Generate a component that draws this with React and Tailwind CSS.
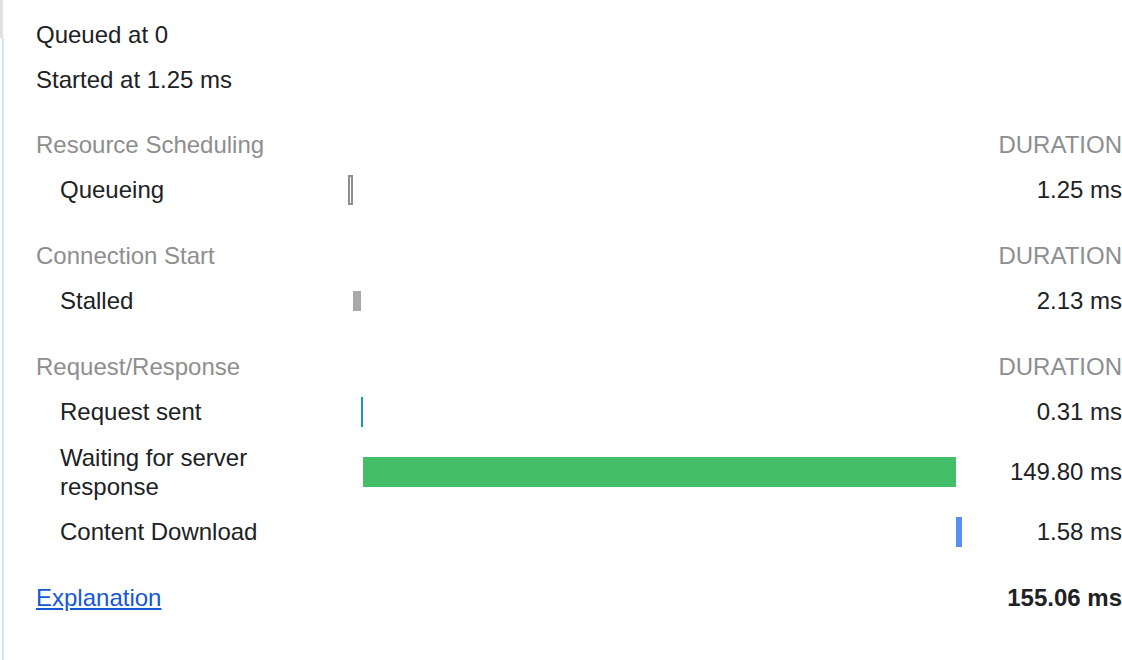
const TOTAL = 155.06;

const sections = [
  {
    title: "Resource Scheduling",
    rows: [{ label: "Queueing", start: 0, dur: 1.25, kind: "queue", value: "1.25 ms" }],
  },
  {
    title: "Connection Start",
    rows: [{ label: "Stalled", start: 1.25, dur: 2.13, kind: "stalled", value: "2.13 ms" }],
  },
  {
    title: "Request/Response",
    rows: [
      { label: "Request sent", start: 3.38, dur: 0.31, kind: "sent", value: "0.31 ms" },
      { label: "Waiting for server response", start: 3.69, dur: 149.8, kind: "wait", value: "149.80 ms", tall: true },
      { label: "Content Download", start: 153.49, dur: 1.58, kind: "download", value: "1.58 ms" },
    ],
  },
];

const barClass = {
  queue: "h-[30px] border-2 border-[#8f8f8f] bg-white",
  stalled: "h-[20px] bg-[#a9a9a9]",
  sent: "h-[30px] bg-[#1b97bf]",
  wait: "h-[30px] bg-[#43bf69]",
  download: "h-[30px] bg-[#5591f1]",
};

function Bar({ start, dur, kind }) {
  const left = (start / TOTAL) * 100;
  const width = Math.max((dur / TOTAL) * 100, 0.3);
  return (
    <div className="relative h-full w-[614px] flex items-center">
      <div
        className={"absolute " + barClass[kind]}
        style={{ left: left + "%", width: width + "%", minWidth: "2px" }}
      />
    </div>
  );
}

export default function App() {
  return (
    <div
      className="flex h-[660px] w-[1122px] overflow-hidden bg-white text-[24px] text-[#202124]"
      style={{ fontFamily: '"Liberation Sans", Arial, sans-serif' }}
    >
      <div className="flex w-[4px] flex-col">
        <div className="h-[38px] w-[3px] bg-[#e2e2e2]" />
        <div className="ml-[2px] w-[2px] flex-1 bg-[#d6e2f6]" />
      </div>

      <div className="flex flex-1 flex-col pl-[32px] pt-[12px]">
        <div className="flex h-[45px] items-center">Queued at 0</div>
        <div className="flex h-[45px] items-center">Started at 1.25 ms</div>

        {sections.map((s, i) => (
          <div key={s.title} className={i === 0 ? "mt-[20px]" : "mt-[21px]"}>
            <div className="flex h-[45px] items-center justify-between text-[#8e8e8e]">
              <span>{s.title}</span>
              <span>DURATION</span>
            </div>
            {s.rows.map((r) => (
              <div key={r.label} className={"flex items-center " + (r.tall ? "h-[75px]" : "h-[45px]")}>
                <div className="w-[312px] pl-[24px] pr-[8px] leading-[29px]">{r.label}</div>
                <div className="h-full">
                  <Bar start={r.start} dur={r.dur} kind={r.kind} />
                </div>
                <div className="flex-1 text-right">{r.value}</div>
              </div>
            ))}
          </div>
        ))}

        <div className="mt-[21px] flex h-[45px] items-center justify-between">
          <a href="#" className="text-[#1558d6] underline">Explanation</a>
          <span className="font-bold">155.06 ms</span>
        </div>
      </div>
    </div>
  );
}
